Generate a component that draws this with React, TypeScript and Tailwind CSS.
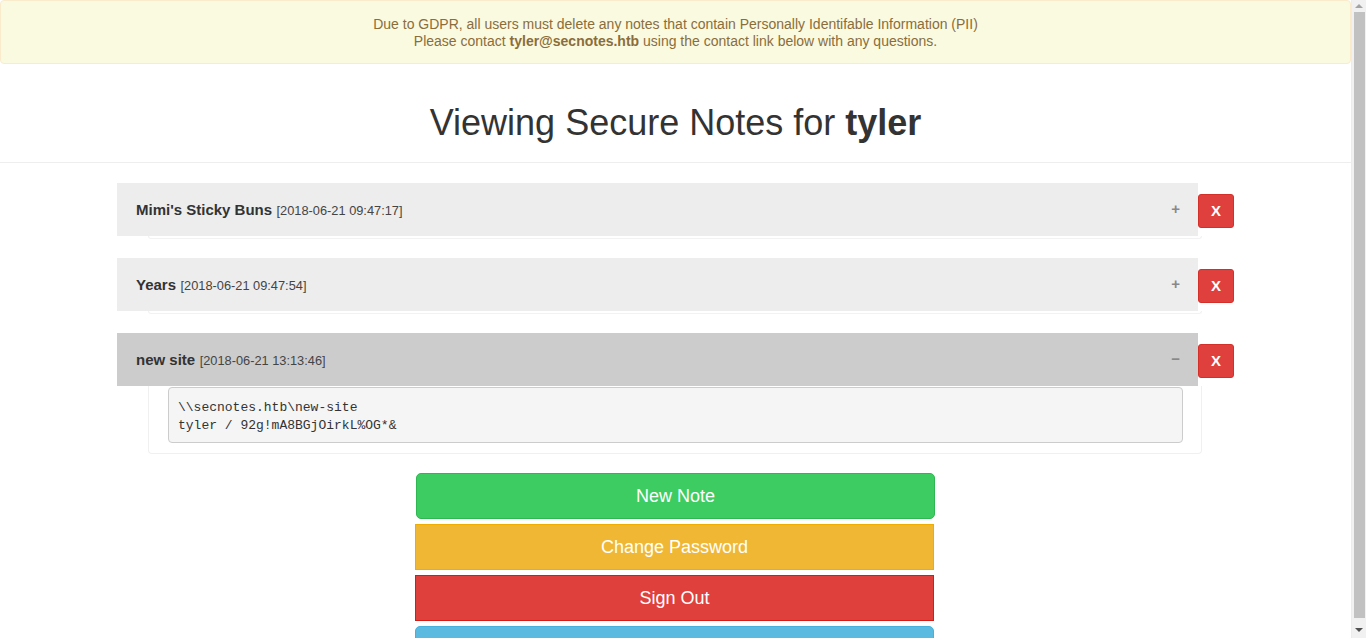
import React from "react";

const notes = [
  { title: "Mimi's Sticky Buns", date: "[2018-06-21 09:47:17]", open: false },
  { title: "Years", date: "[2018-06-21 09:47:54]", open: false },
  { title: "new site", date: "[2018-06-21 13:13:46]", open: true },
];

function Note({ title, date, open }: { title: string; date: string; open: boolean }) {
  return (
    <div className="flex shrink-0 flex-col">
      <div className="flex items-center">
        <div
          className={`flex h-[53px] w-[1081px] items-center justify-between pl-[19px] pr-[18px] ${
            open ? "bg-[#cccccc]" : "bg-[#ededed]"
          }`}
        >
          <div className="text-[#333]">
            <span className="text-[15px] font-bold">{title}</span>{" "}
            <span className="text-[12.8px] text-[#444]">{date}</span>
          </div>
          <span className="text-[15px] font-bold text-[#888]">{open ? "−" : "+"}</span>
        </div>
        <button className="mt-[3px] flex h-[34px] w-[36px] items-center justify-center rounded-[3px] border border-[#d52f2a] bg-[#e0403d] text-[15px] font-bold text-white">
          X
        </button>
      </div>
      {open ? (
        <div className="ml-[31px] w-[1054px] rounded-b-[4px] border border-t-0 border-[#f0f0f0] pb-[10px] pl-[19px] pr-[18px] pt-[1px]">
          <pre className="rounded-[4px] border border-[#cccccc] bg-[#f5f5f5] px-[9px] pb-[7px] pt-[11px] font-['Liberation_Mono',monospace] text-[13px] leading-[18px] text-[#333]">
{"\\\\secnotes.htb\\new-site\ntyler / 92g!mA8BGjOirkL%OG*&"}
          </pre>
        </div>
      ) : (
        <div className="ml-[31px] h-[3px] w-[1054px] rounded-b-[3px] border border-t-0 border-[#f2f2f2]" />
      )}
    </div>
  );
}

export default function App() {
  return (
    <div className="flex h-[638px] w-[1366px] overflow-hidden bg-white font-['Liberation_Sans',Arial,sans-serif] text-[#333]">
      <div className="flex w-[1351px] shrink-0 flex-col">
        <div className="flex h-[64px] shrink-0 flex-col items-center justify-center rounded-[4px] border border-[#faebcc] bg-[#fafae0] pt-[1px] text-[14px] leading-[17px] text-[#8a6d3b]">
          <div>Due to GDPR, all users must delete any notes that contain Personally Identifable Information (PII)</div>
          <div>
            Please contact <b>tyler@secnotes.htb</b> using the contact link below with any questions.
          </div>
        </div>
        <div className="flex h-[99px] shrink-0 items-center justify-center border-b border-[#eeeeee] pt-[20px]">
          <h1 className="text-[36px] leading-[40px] text-[#333]">
            Viewing Secure Notes for <b>tyler</b>
          </h1>
        </div>
        <div className="flex shrink-0 flex-col gap-[19px] pl-[117px] pt-[20px]">
          {notes.map((n) => (
            <Note key={n.title} {...n} />
          ))}
        </div>
        <div className="mt-[19px] flex shrink-0 flex-col gap-[5px] pl-[415px]">
          <button className="ml-[1px] h-[46px] w-[519px] shrink-0 rounded-[5px] border border-[#2fb852] bg-[#3dcc61] text-[18px] text-white">
            New Note
          </button>
          <button className="h-[46px] w-[519px] shrink-0 border border-[#f0ad00] bg-[#efb734] text-[18px] text-white">
            Change Password
          </button>
          <button className="h-[46px] w-[519px] shrink-0 border border-[#d51d17] bg-[#df403c] text-[18px] text-white">
            Sign Out
          </button>
          <button className="h-[46px] w-[519px] shrink-0 rounded-t-[5px] border border-[#46b1dd] bg-[#5bbae0] text-[18px] text-white">
            Contact Us
          </button>
        </div>
      </div>
      <div className="flex w-[15px] shrink-0 flex-col items-center border-l border-[#ececec] bg-[#f1f1f1]">
        <div className="flex h-[12px] shrink-0 items-center justify-center">
          <div className="h-0 w-0 border-x-[4px] border-b-[4px] border-x-transparent border-b-[#a3a3a3]" />
        </div>
        <div className="h-[606px] w-[11px] shrink-0 bg-[#c1c1c1]" />
        <div className="flex flex-1 items-end justify-center pb-[6px]">
          <div className="h-0 w-0 border-x-[4px] border-t-[4px] border-x-transparent border-t-[#505050]" />
        </div>
      </div>
    </div>
  );
}
